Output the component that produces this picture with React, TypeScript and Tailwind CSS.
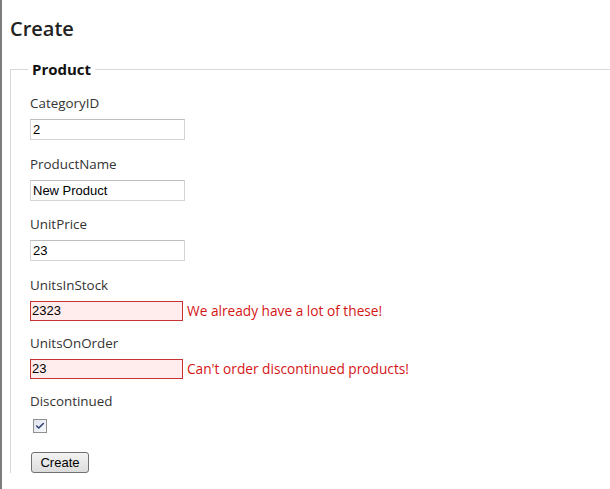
import { Check } from 'lucide-react'

type Field = {
  name: string
  value: string
  error?: string
}

const FIELDS: Field[] = [
  { name: 'CategoryID', value: '2' },
  { name: 'ProductName', value: 'New Product' },
  { name: 'UnitPrice', value: '23' },
  { name: 'UnitsInStock', value: '2323', error: 'We already have a lot of these!' },
  { name: 'UnitsOnOrder', value: '23', error: "Can't order discontinued products!" },
]

const labelFont = "font-['Open_Sans','DejaVu_Sans',sans-serif]"
const inputFont = "font-['Liberation_Sans',Arial,sans-serif]"

export default function App() {
  return (
    <div className="w-[610px] h-[489px] overflow-hidden bg-white border-l-2 border-[#7d7d7d] pl-2">
      {/* Title */}
      <h2 className={`${labelFont} text-[20px] leading-[24px] font-semibold text-[#222] pt-[17px] pb-[18px]`}>
        Create
      </h2>

      <fieldset className="w-[640px] border-l border-t border-[#d8d8d8] pl-[19px] pt-[15px]">
        <legend className={`${labelFont} -ml-[2px] px-1 text-[15px] leading-[20px] font-bold text-[#111]`}>
          Product
        </legend>

        {FIELDS.map((f, i) => (
          <div key={f.name} className={f.error ? 'mb-[13px]' : i === 1 ? 'mb-[14px]' : 'mb-[15px]'}>
            <div className={`${labelFont} text-[13.4px] leading-[18px] text-[#333]`}>{f.name}</div>
            <div className="mt-[7px] flex items-center">
              {f.error ? (
                <>
                  <div
                    className={`${inputFont} w-[153px] h-[20px] border border-[#c83232] bg-[#ffeded] pl-[1px] text-[13px] leading-[18px] text-black`}
                  >
                    {f.value}
                  </div>
                  <span className={`${labelFont} ml-[4px] text-[13.7px] leading-[18px] text-[#d41616]`}>{f.error}</span>
                </>
              ) : (
                <div
                  className={`${inputFont} w-[155px] h-[21px] border border-[#d4d4d4] border-t-[#bdbdbd] bg-white pl-[2px] text-[13px] leading-[19px] text-black`}
                >
                  {f.value}
                </div>
              )}
            </div>
          </div>
        ))}

        {/* Discontinued */}
        <div>
          <div className={`${labelFont} text-[13.4px] leading-[18px] text-[#333]`}>Discontinued</div>
          <div className="mt-[9px] ml-[3px] w-[14px] h-[14px] border border-[#8e8f8f] bg-gradient-to-br from-[#dfe4ee] to-[#f7f8fb] flex items-center justify-center">
            <Check className="w-[10px] h-[10px] text-[#2a3c6e]" strokeWidth={3.5} />
          </div>
        </div>

        <button
          className={`${inputFont} mt-[19px] ml-[1px] w-[58px] h-[21px] rounded-[3px] border border-[#707070] bg-gradient-to-b from-[#f3f3f3] to-[#dcdcdc] text-[13px] leading-[19px] text-black`}
        >
          Create
        </button>
      </fieldset>
    </div>
  )
}
